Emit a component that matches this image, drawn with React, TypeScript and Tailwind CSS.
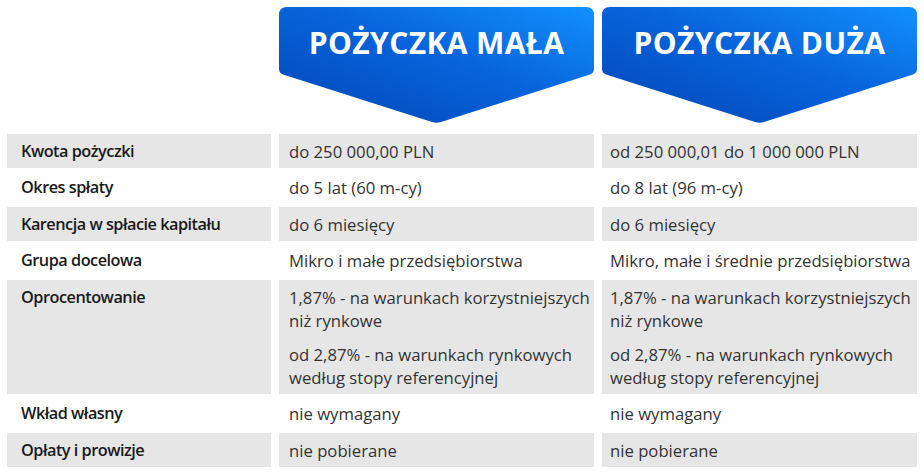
const rows: { label: string; small: string[]; big: string[] }[] = [
  { label: "Kwota pożyczki", small: ["do 250 000,00 PLN"], big: ["od 250 000,01 do 1 000 000 PLN"] },
  { label: "Okres spłaty", small: ["do 5 lat (60 m-cy)"], big: ["do 8 lat (96 m-cy)"] },
  { label: "Karencja w spłacie kapitału", small: ["do 6 miesięcy"], big: ["do 6 miesięcy"] },
  { label: "Grupa docelowa", small: ["Mikro i małe przedsiębiorstwa"], big: ["Mikro, małe i średnie przedsiębiorstwa"] },
  {
    label: "Oprocentowanie",
    small: [
      "1,87% - na warunkach korzystniejszych niż rynkowe",
      "od 2,87% - na warunkach rynkowych według stopy referencyjnej",
    ],
    big: [
      "1,87% - na warunkach korzystniejszych niż rynkowe",
      "od 2,87% - na warunkach rynkowych według stopy referencyjnej",
    ],
  },
  { label: "Wkład własny", small: ["nie wymagany"], big: ["nie wymagany"] },
  { label: "Opłaty i prowizje", small: ["nie pobierane"], big: ["nie pobierane"] },
];

function Badge({ title, id }: { title: string; id: string }) {
  return (
    <div className="relative h-[116px] flex justify-center pt-[13px]">
      <svg className="absolute inset-0" width="315" height="117" viewBox="0 0 315 117">
        <defs>
          <linearGradient id={id} x1="0" y1="1" x2="1" y2="0">
            <stop offset="0%" stopColor="#0345b3" />
            <stop offset="55%" stopColor="#0864dc" />
            <stop offset="100%" stopColor="#1190ff" />
          </linearGradient>
        </defs>
        <path
          d="M8,0 H307 Q315,0 315,8 V62 Q315,66 311,67.5 L162,115 Q157.5,116.5 153,115 L4,67.5 Q0,66 0,62 V8 Q0,0 8,0 Z"
          fill={`url(#${id})`}
        />
      </svg>
      <span className="relative text-white font-bold text-[30px] leading-[46px] tracking-[0.4px]">{title}</span>
    </div>
  );
}

function Cell({ lines, className }: { lines: string[]; className: string }) {
  return (
    <div className={className}>
      {lines.map((l, i) => (
        <p key={i} className={i > 0 ? "mt-[11px]" : ""}>
          {l}
        </p>
      ))}
    </div>
  );
}

export default function App() {
  return (
    <div className="bg-white w-[924px] h-[475px] pl-[7px] pt-[7px] font-['Open_Sans',sans-serif]">
      <div className="grid grid-cols-[264px_315px_315px] gap-x-2">
        <div />
        <Badge title="POŻYCZKA MAŁA" id="g1" />
        <Badge title="POŻYCZKA DUŻA" id="g2" />
      </div>
      <div className="grid grid-cols-[264px_315px_315px] gap-x-2 gap-y-[2.5px] mt-[11px] text-[16.7px] leading-[23px]">
        {rows.map((r, i) => {
          const bg = i % 2 === 0 ? "bg-[#e6e6e6]" : "";
          return (
            <div key={r.label} className="contents">
              <div className={`${bg} pl-[14px] py-[5.5px] font-semibold text-[16.3px] tracking-[-0.5px] text-[#1a1a1a]`}>
                {r.label}
              </div>
              <Cell lines={r.small} className={`${bg} pl-[10px] pr-[2px] py-[5.5px] text-[#333]`} />
              <Cell lines={r.big} className={`${bg} pl-[8px] pr-[2px] py-[5.5px] text-[#333]`} />
            </div>
          );
        })}
      </div>
    </div>
  );
}
